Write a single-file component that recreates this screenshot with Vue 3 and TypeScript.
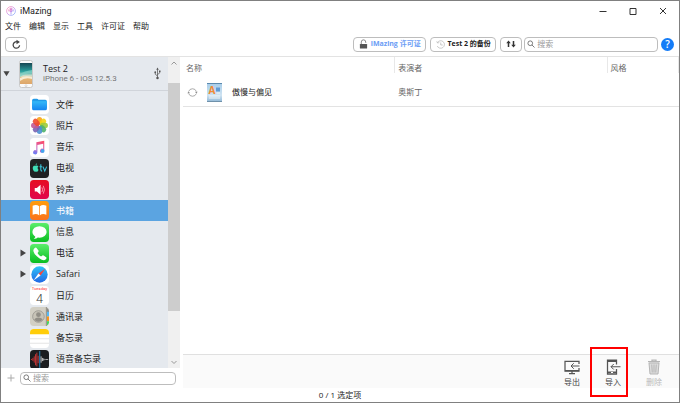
<script setup lang="ts">
import { ref } from 'vue'

interface Category {
  id: string
  label: string
  expandable?: boolean
}

interface Book {
  title: string
  artist: string
  genre: string
}

const menus: string[] = ['文件', '编辑', '显示', '工具', '许可证', '帮助']

const categories: Category[] = [
  { id: 'files', label: '文件' },
  { id: 'photos', label: '照片' },
  { id: 'music', label: '音乐' },
  { id: 'tv', label: '电视' },
  { id: 'ringtones', label: '铃声' },
  { id: 'books', label: '书籍' },
  { id: 'messages', label: '信息' },
  { id: 'phone', label: '电话', expandable: true },
  { id: 'safari', label: 'Safari', expandable: true },
  { id: 'calendar', label: '日历' },
  { id: 'contacts', label: '通讯录' },
  { id: 'notes', label: '备忘录' },
  { id: 'voice', label: '语音备忘录' },
]

const books: Book[] = [{ title: '傲慢与偏见', artist: '奥斯丁', genre: '' }]

const petals: string[] = ['#f9a11b', '#f4d313', '#9ccb3b', '#4fb36b', '#4b8fd0', '#7a64b4', '#c05a96', '#ee4b2f']

const selected = ref('books')
const query = ref('')
const sideQuery = ref('')
</script>

<template>
  <div class="window">
    <header class="titlebar">
      <svg class="logo" viewBox="0 0 20 20" aria-hidden="true">
        <defs>
          <linearGradient id="logo-ring" x1="0" y1="0" x2="1" y2="1">
            <stop offset="0" stop-color="#ff7d9c" />
            <stop offset="0.5" stop-color="#c27be8" />
            <stop offset="1" stop-color="#59a9ff" />
          </linearGradient>
        </defs>
        <circle cx="10" cy="10" r="8.8" fill="#fff" stroke="url(#logo-ring)" stroke-width="1.3" />
        <path d="M10 17V8M10 12L6.5 9M10 12L13.5 9M6 11a4.5 4.5 0 1 1 8 0" fill="none" stroke="url(#logo-ring)" stroke-width="1.5" />
        <circle cx="10" cy="7.5" r="1.8" fill="#d76fcb" />
      </svg>
      <h1 class="title">iMazing</h1>
      <div class="window-buttons">
        <button type="button" aria-label="最小化">
          <svg viewBox="0 0 8 8"><path d="M.5 4.5h7" /></svg>
        </button>
        <button type="button" aria-label="最大化">
          <svg viewBox="0 0 8 8"><path d="M1 1.5h6v6H1z" /></svg>
        </button>
        <button type="button" aria-label="关闭">
          <svg viewBox="0 0 8 8"><path d="M1 1l6 6M7 1L1 7" /></svg>
        </button>
      </div>
    </header>

    <nav class="menubar">
      <button v-for="menu in menus" :key="menu" type="button">{{ menu }}</button>
    </nav>

    <div class="toolbar">
      <button class="tool refresh" type="button" aria-label="刷新">
        <svg viewBox="0 0 16 16" fill="none" stroke="#444" stroke-width="1.8">
          <path d="M12.500 9A4.700 4.700 0 1 1 9.500 4.300" />
          <path d="M8 1l5 3.500-5 3z" fill="#444" stroke="none" />
        </svg>
      </button>
      <span class="spacer"></span>
      <button class="tool license" type="button">
        <svg viewBox="0 0 16 18">
          <path d="M4 9V5.500a4 4 0 0 1 8 0V7" fill="none" stroke="#777" stroke-width="1.500" />
          <rect x="1.500" y="9" width="13" height="8" rx="1" fill="#555" />
        </svg>
        <span>iMazing 许可证</span>
      </button>
      <button class="tool backup" type="button">
        <svg viewBox="0 0 18 18" fill="none" stroke="#aaa" stroke-width="1.200">
          <path d="M3 5a7.500 7.500 0 1 1-.5 7M1.500 2.500L3 6l3.500-.8M9.500 5v5h4" />
        </svg>
        <span>Test 2 的备份</span>
      </button>
      <button class="tool transfer" type="button" aria-label="传输">
        <svg viewBox="0 0 20 16" fill="#333">
          <path d="M5 1l4.500 5.500h-3V14h-3V6.500h-3zM15 15l-4.500-5.500h3V2h3v7.500h3z" />
        </svg>
      </button>
      <label class="search main-search">
        <svg viewBox="0 0 16 16" fill="none" stroke="#666" stroke-width="1.700">
          <circle cx="6.500" cy="6.500" r="4.700" /><path d="M10 10l5 5" />
        </svg>
        <input v-model="query" type="text" placeholder="搜索" aria-label="搜索" />
      </label>
      <button class="help" type="button" aria-label="帮助">?</button>
    </div>

    <div class="content">
      <aside class="sidebar">
        <div class="tree">
          <div class="tree-body">
            <div class="device">
              <svg class="disclosure" viewBox="0 0 8 8"><path d="M.5 1.500h7L4 7z" /></svg>
              <svg class="device-picture" viewBox="0 0 14 28" aria-hidden="true">
                <defs>
                  <linearGradient id="wallpaper" x1="0" y1="0" x2="0" y2="1">
                    <stop offset="0" stop-color="#174653" />
                    <stop offset="0.4" stop-color="#2ba19e" />
                    <stop offset="0.62" stop-color="#d7e5d2" />
                    <stop offset="0.7" stop-color="#e5b878" />
                    <stop offset="1" stop-color="#dda66a" />
                  </linearGradient>
                </defs>
                <rect x=".5" y=".5" width="13" height="27" rx="2" fill="#fafafa" stroke="#c9c9c9" />
                <rect x="1" y="3" width="12" height="21" fill="url(#wallpaper)" />
                <path d="M1 14q4-3 12-4v3q-7 0-12 4z" fill="#7fd0c4" opacity=".8" />
                <path d="M1 18q5-3 12-1v2q-7-2-12 2z" fill="#f7ead2" />
                <circle cx="7" cy="25.700" r="1" fill="none" stroke="#bbb" stroke-width=".5" />
              </svg>
              <div class="device-text">
                <strong>Test 2</strong>
                <span>iPhone 6 - iOS 12.5.3</span>
              </div>
              <svg class="usb" viewBox="0 0 14 24" fill="none" stroke="#555" stroke-width="1.500">
                <path d="M7 3v17M7 17l-4.500-3.500V10M7 14l4.500-3V8" />
                <path d="M7 0L4.500 4.500h5zM10 6h3v3h-3z" fill="#555" stroke="none" />
                <circle cx="2.500" cy="9.500" r="1.800" fill="#555" stroke="none" />
                <circle cx="7" cy="21" r="2.500" fill="#555" stroke="none" />
              </svg>
            </div>

            <ul class="categories">
              <li v-for="item in categories" :key="item.id">
                <button
                  type="button"
                  class="category"
                  :class="{ selected: selected === item.id }"
                  @click="selected = item.id"
                >
                  <span class="arrow">
                    <svg v-if="item.expandable" viewBox="0 0 6 8"><path d="M.5.500v7L6 4z" /></svg>
                  </span>
                  <svg class="app-icon" viewBox="0 0 36 36" aria-hidden="true">
                    <g v-if="item.id === 'files'">
                      <defs>
                        <linearGradient id="folder" x1="0" y1="0" x2="0" y2="1">
                          <stop offset="0" stop-color="#35b9f8" /><stop offset="1" stop-color="#1583f0" />
                        </linearGradient>
                      </defs>
                      <rect width="36" height="36" rx="7" fill="#fff" />
                      <path d="M4 10q0-3 3-3h6q2 0 3 2h13q3 0 3 3v13H4z" fill="#229be8" />
                      <path d="M4 12h28v14q0 3-3 3H7q-3 0-3-3z" fill="url(#folder)" />
                    </g>
                    <g v-else-if="item.id === 'photos'">
                      <rect width="36" height="36" rx="7" fill="#fff" />
                      <rect
                        v-for="(color, index) in petals"
                        :key="color"
                        x="13" y="2" width="10" height="15" rx="5"
                        :fill="color"
                        fill-opacity=".9"
                        :transform="`rotate(${index * 45} 18 18)`"
                      />
                    </g>
                    <g v-else-if="item.id === 'music'">
                      <defs>
                        <linearGradient id="note" x1=".6" y1="0" x2=".3" y2="1">
                          <stop offset="0" stop-color="#fb4b69" /><stop offset=".5" stop-color="#d465b7" /><stop offset="1" stop-color="#6a7cf5" />
                        </linearGradient>
                      </defs>
                      <rect width="36" height="36" rx="7" fill="#fff" />
                      <path d="M12 8l15-3v19a4 4 0 1 1-2-3.500V11l-11 2.300V27a4 4 0 1 1-2-3.500z" fill="url(#note)" />
                      <circle cx="24" cy="24.500" r="3.500" fill="#41a7ef" />
                    </g>
                    <g v-else-if="item.id === 'tv'">
                      <rect width="36" height="36" rx="7" fill="#202224" />
                      <path d="M10.500 13q2-1 4 0 1.500 1 1.500 1-2 1.500-1.500 3.500.3 2 1.800 3-1.500 3.500-3 3.500-1 0-2-.5-1 .5-2 .5C7 23.500 5 20 5.200 16.500 5.500 13 8 12 10.500 13zM10.500 12q0-3 3-4 0 3-3 4z" fill="#40ddb8" />
                      <path d="M20.500 10v10.500q0 2.500 2.500 2.500M18 14.500h5M24.500 14.500l3.500 8.500 3.500-8.500" fill="none" stroke="#3bc9df" stroke-width="2" />
                    </g>
                    <g v-else-if="item.id === 'ringtones'">
                      <defs>
                        <linearGradient id="tone" x1="0" y1="0" x2="0" y2="1">
                          <stop offset="0" stop-color="#e60d21" /><stop offset="1" stop-color="#e1074d" />
                        </linearGradient>
                      </defs>
                      <rect width="36" height="36" rx="7" fill="url(#tone)" />
                      <path d="M9 15h4l7-6v19l-7-6H9z" fill="#fff" />
                      <path d="M22.500 14q3 4.500 0 9M25 11q5 7.500 0 15" fill="none" stroke="#ffb4bf" stroke-width="1.500" />
                    </g>
                    <g v-else-if="item.id === 'books'">
                      <defs>
                        <linearGradient id="book" x1="0" y1="0" x2="0" y2="1">
                          <stop offset="0" stop-color="#ff9d0d" /><stop offset="1" stop-color="#fa721c" />
                        </linearGradient>
                      </defs>
                      <rect width="36" height="36" rx="7" fill="url(#book)" />
                      <path d="M5 9q7-3.500 12.300 1v17Q12 23 5 26zM31 9q-7-3.500-12.300 1v17Q24 23 31 26z" fill="#fff" />
                    </g>
                    <g v-else-if="item.id === 'messages'">
                      <defs>
                        <linearGradient id="green" x1="0" y1="0" x2="0" y2="1">
                          <stop offset="0" stop-color="#5cee6c" /><stop offset="1" stop-color="#08bd20" />
                        </linearGradient>
                      </defs>
                      <rect width="36" height="36" rx="7" fill="url(#green)" />
                      <ellipse cx="18" cy="17" rx="13.500" ry="11" fill="#fff" />
                      <path d="M10 24q1 4-3 6 5 .5 8-3z" fill="#fff" />
                    </g>
                    <g v-else-if="item.id === 'phone'">
                      <rect width="36" height="36" rx="7" fill="url(#green)" />
                      <path d="M8 8.500q3-3 4.500-1l3.500 5q1 2-1 3.500-1 1 0 2.500 2 3 5 4.500 1.500 1 2.500-.3 1.500-2 3.500-.7l4.500 3.200q2 1.500-1 4.300-4 3-12-2.500Q8 20 6.500 13.500 6 10.500 8 8.500z" fill="#fff" />
                    </g>
                    <g v-else-if="item.id === 'safari'">
                      <defs>
                        <linearGradient id="compass" x1="0" y1="0" x2="0" y2="1">
                          <stop offset="0" stop-color="#2fc3f8" /><stop offset="1" stop-color="#2168e5" />
                        </linearGradient>
                      </defs>
                      <rect width="36" height="36" rx="7" fill="#fff" />
                      <circle cx="18" cy="18" r="15.500" fill="url(#compass)" />
                      <path d="M29 7L16 16l4 4z" fill="#f4483f" />
                      <path d="M7 29l9-13 4 4z" fill="#fff" />
                    </g>
                    <g v-else-if="item.id === 'calendar'" class="calendar">
                      <rect width="36" height="36" rx="7" fill="#fff" />
                      <text x="18" y="8" text-anchor="middle" font-size="8" fill="#f33">Tuesday</text>
                      <text x="18" y="32" text-anchor="middle" font-size="24" font-weight="300" fill="#333">4</text>
                    </g>
                    <g v-else-if="item.id === 'contacts'">
                      <rect width="36" height="36" rx="7" fill="#d2cfc4" />
                      <path d="M31 1q5 2 5 7v2h-5z" fill="#8a8a88" />
                      <path d="M32 9h4v9h-4z" fill="#55b9f5" /><path d="M32 18h4v9h-4z" fill="#fb9418" />
                      <path d="M32 27h4v2q0 4-4 6z" fill="#45d95c" /><path d="M30 0h2v36h-2z" fill="#98958b" />
                      <circle cx="16" cy="18" r="11" fill="#c7c3b7" stroke="#96938b" stroke-width="1.500" />
                      <circle cx="16" cy="14.500" r="4.500" fill="#918e86" />
                      <path d="M8 24q2-4 8-4t8 4q-8 8-16 0z" fill="#918e86" />
                    </g>
                    <g v-else-if="item.id === 'notes'">
                      <rect width="36" height="36" rx="7" fill="#fff" />
                      <path d="M0 10V7q0-7 7-7h22q7 0 7 7v3z" fill="#ffcd09" />
                      <path d="M0 18.500h36M0 27h36" stroke="#d5d5d5" stroke-width="1.200" />
                    </g>
                    <g v-else>
                      <rect width="36" height="36" rx="7" fill="#1c1d1f" />
                      <path d="M3 17v2M5.500 15v6M8 12v12M10.500 8v21M13 5v26M15.500 11v14" stroke="#e83c3c" stroke-width="1.500" />
                      <path d="M18.500 2v32" stroke="#2aa8ed" stroke-width="1.500" />
                      <path d="M21 12v12M23.500 15v6M26 16v4M28.500 17v2M31 17v2M33.500 17v2" stroke="#eee" stroke-width="1.500" />
                    </g>
                  </svg>
                  <span>{{ item.label }}</span>
                </button>
              </li>
            </ul>
          </div>
          <div class="scrollbar" aria-hidden="true">
            <svg viewBox="0 0 12 12"><path d="M3.500 7.500L6 5l2.500 2.500" /></svg>
            <div class="track"><div class="thumb"></div><div class="rest"></div></div>
            <svg viewBox="0 0 12 12"><path d="M3.500 5L6 7.500 8.500 5" /></svg>
          </div>
        </div>
        <div class="side-footer">
          <button class="add" type="button" aria-label="添加">
            <svg viewBox="0 0 8 8"><path d="M4 .500v7M.500 4h7" fill="none" stroke="#aaa" /></svg>
          </button>
          <label class="search">
            <svg viewBox="0 0 16 16" fill="none" stroke="#666" stroke-width="1.700">
              <circle cx="6.500" cy="6.500" r="4.700" /><path d="M10 10l5 5" />
            </svg>
            <input v-model="sideQuery" type="text" placeholder="搜索" aria-label="搜索设备" />
          </label>
        </div>
      </aside>

      <main class="main">
        <table class="books">
          <colgroup><col class="col-wide" /><col class="col-wide" /><col /></colgroup>
          <thead>
            <tr><th>名称</th><th>表演者</th><th>风格</th></tr>
          </thead>
          <tbody>
            <tr v-for="book in books" :key="book.title">
              <td>
                <div class="book">
                  <svg class="sync" viewBox="0 0 20 20" fill="none" stroke="#8a8a8a" stroke-width="1.300">
                    <path d="M3 8a7.500 7.500 0 0 1 14 0M17 12a7.500 7.500 0 0 1-14 0" />
                    <path d="M14.500 8.500h5L17 12zM.500 11.500h5L3 8z" fill="#8a8a8a" stroke="none" />
                  </svg>
                  <svg class="cover" viewBox="0 0 30 38">
                    <defs>
                      <linearGradient id="cover-fill" x1="0" y1="0" x2="0" y2="1">
                        <stop offset="0" stop-color="#a6cce8" /><stop offset=".65" stop-color="#cfe3f2" /><stop offset="1" stop-color="#8eb6d5" />
                      </linearGradient>
                    </defs>
                    <rect width="30" height="38" rx="1" fill="url(#cover-fill)" />
                    <path d="M0 0h30v2H0z" fill="#5b89ae" />
                    <path d="M0 36h30v2H0z" fill="#6f91aa" />
                    <path d="M18 9h8v8h-8z" fill="#609bd5" />
                    <path d="M19 20h7M4 26h22M4 30h22" stroke="#fff" stroke-width="1.500" />
                    <text x="3" y="22" font-size="20" font-weight="bold" fill="#f18b35">A</text>
                  </svg>
                  <span>{{ book.title }}</span>
                </div>
              </td>
              <td>{{ book.artist }}</td>
              <td>{{ book.genre }}</td>
            </tr>
          </tbody>
        </table>

        <div class="actions">
          <button type="button">
            <svg viewBox="0 0 32 32" fill="none" stroke="#555" stroke-width="2.500">
              <path d="M30 10V4.500H2V24h28v-6" />
              <path d="M2 23h28M10 29h12M16 24v5" />
              <path d="M31 14H14M19.500 8.500L14 14l5.500 5.500" stroke-width="2" />
            </svg>
            <span>导出</span>
          </button>
          <button type="button" class="highlighted">
            <svg viewBox="0 0 32 32" fill="none" stroke="#555" stroke-width="2.500">
              <path d="M23 11V2H5v28h18V20" />
              <path d="M5 4h18M5 27h18" stroke-width="4" />
              <path d="M12 27h4" stroke="#fff" stroke-width="2" />
              <path d="M31 15.500H12M17.500 10L12 15.500l5.500 5.500" stroke-width="2" />
            </svg>
            <span>导入</span>
          </button>
          <button type="button" disabled>
            <svg viewBox="0 0 32 32" fill="none" stroke="#b5b5b5" stroke-width="2">
              <path d="M6 8h20l-2 22H8z" fill="#ddd" />
              <path d="M4 5h24M12 5V2h8v3" stroke-width="2.500" />
              <path d="M11.500 11l1 16M16 11v16M20.500 11l-1 16" />
            </svg>
            <span>删除</span>
          </button>
        </div>
      </main>
    </div>

    <footer class="status">0 / 1 选定项</footer>
  </div>
</template>

<style>
body {
  margin: 0;
  background: #fff;
}
</style>

<style scoped>
.window {
  box-sizing: border-box;
  display: flex;
  flex-direction: column;
  height: 100vh;
  border: 1px solid #808080;
  background: #fff;
  color: #222;
  font-family: "Open Sans", "Noto Sans CJK SC", sans-serif;
  font-size: 8px;
  line-height: 12px;
}

svg {
  display: block;
  flex: none;
}

button {
  margin: 0;
  padding: 0;
  border: 0;
  background: none;
  color: inherit;
  font: inherit;
}

.titlebar {
  display: flex;
  align-items: center;
  height: 19px;
  padding-left: 5px;
}

.logo {
  width: 10px;
  height: 10px;
}

.title {
  flex: 1;
  margin: 0 0 0 4px;
  font-family: Roboto, sans-serif;
  font-size: 9px;
  font-weight: 400;
}

.window-buttons {
  display: flex;
  padding-right: 1px;
}

.window-buttons button {
  display: grid;
  place-items: center;
  width: 30px;
  height: 18px;
}

.window-buttons svg {
  width: 8px;
  height: 8px;
  fill: none;
  stroke: #333;
}

.menubar {
  display: flex;
  gap: 8px;
  padding: 0 4px;
}

.toolbar {
  display: flex;
  align-items: center;
  gap: 2px;
  height: 24px;
  padding: 0 5px 0 4px;
  border-bottom: 1px solid #e3e3e3;
}

.spacer {
  flex: 1;
}

.tool,
.search {
  box-sizing: border-box;
  display: flex;
  align-items: center;
  height: 15px;
  border: 1px solid #bdbdbd;
  border-radius: 4px;
  background: #fff;
}

.tool {
  justify-content: center;
  gap: 3px;
  font-size: 7px;
  font-weight: 700;
}

.refresh,
.transfer {
  width: 22px;
}

.refresh svg {
  width: 11px;
  height: 11px;
}

.transfer svg {
  width: 10px;
  height: 8px;
}

.license {
  min-width: 73px;
  color: #6a9cf5;
}

.license svg {
  width: 9px;
  height: 10px;
}

.backup {
  min-width: 66px;
  margin: 0 2px;
}

.backup svg {
  width: 9px;
  height: 9px;
}

.search {
  gap: 2px;
  padding: 0 2px;
}

.search svg {
  width: 8px;
  height: 8px;
}

.search input {
  flex: 1;
  min-width: 0;
  padding: 0;
  border: 0;
  outline: 0;
  background: none;
  font: inherit;
}

.search input::placeholder {
  color: #999;
}

.main-search {
  width: 20%;
}

.help {
  width: 13px;
  height: 13px;
  margin-left: 1px;
  border-radius: 50%;
  background: #147cf7;
  color: #fff;
  font-size: 10px;
  font-weight: 600;
}

.content {
  display: flex;
  flex: 1;
  min-height: 0;
}

.sidebar {
  display: flex;
  flex: none;
  flex-direction: column;
  width: 179px;
  margin-right: 3px;
}

.tree {
  display: flex;
  flex: 1;
  min-height: 0;
  background: #e5e9ee;
}

.tree-body {
  display: flex;
  flex: 1;
  flex-direction: column;
  min-width: 0;
  overflow: hidden;
}

.device {
  display: flex;
  align-items: center;
  height: 33px;
  padding: 0 7px 0 2px;
  border-bottom: 1px solid #d0d4da;
}

.disclosure {
  width: 7px;
  height: 7px;
  fill: #444;
}

.device-picture {
  width: 14px;
  height: 28px;
  margin: 0 10px 0 9px;
}

.device-text {
  display: flex;
  flex: 1;
  flex-direction: column;
  line-height: 10px;
}

.device-text strong {
  font-size: 9px;
  font-weight: 400;
}

.device-text span {
  color: #777;
  font-family: Roboto, sans-serif;
}

.usb {
  width: 7px;
  height: 13px;
}

.categories {
  display: flex;
  flex: 1;
  flex-direction: column;
  margin: 3px 0 -2px;
  padding: 0;
  list-style: none;
}

.categories li {
  display: flex;
  flex: 1;
}

.category {
  display: flex;
  flex: 1;
  align-items: center;
  padding-left: 19px;
  font-size: 9px;
  text-align: left;
}

.category.selected {
  background: #5ba4e1;
  color: #fff;
}

.arrow {
  width: 10px;
}

.arrow svg {
  width: 6px;
  height: 8px;
  fill: #444;
}

.app-icon {
  width: 19px;
  height: 19px;
  margin-right: 7px;
}

.calendar {
  font-family: Roboto, sans-serif;
}

.scrollbar {
  display: flex;
  flex-direction: column;
  width: 12px;
  background: #f0f0f0;
}

.scrollbar svg {
  width: 12px;
  height: 12px;
  fill: none;
  stroke: #999;
}

.track {
  display: flex;
  flex: 1;
  flex-direction: column;
  padding-top: 14px;
}

.thumb {
  flex: 5;
  background: #cdcdcd;
}

.rest {
  flex: 1;
}

.side-footer {
  display: flex;
  align-items: center;
  height: 20px;
  padding: 0 4px 0 6px;
}

.add {
  margin-right: 5px;
}

.add svg {
  width: 8px;
  height: 8px;
}

.side-footer .search {
  flex: 1;
  height: 13px;
}

.main {
  display: flex;
  flex: 1;
  flex-direction: column;
  justify-content: space-between;
  min-width: 0;
}

.books {
  width: 100%;
  border-spacing: 0;
  table-layout: fixed;
  color: #666;
}

.col-wide {
  width: 42.8%;
}

.books th {
  height: 21px;
  padding: 0 0 0 3px;
  background: linear-gradient(#e8e8e8, #e8e8e8) right top / 1px 16px no-repeat;
  font-weight: 400;
  text-align: left;
}

.books td {
  height: 28px;
  padding: 0 0 0 3px;
  border-bottom: 1px solid #e3e3e3;
}

.book {
  display: flex;
  align-items: center;
  padding-left: 1px;
  color: #222;
}

.sync {
  width: 11px;
  height: 11px;
}

.cover {
  width: 15px;
  height: 19px;
  margin: 0 10px 0 9px;
}

.actions {
  display: flex;
  justify-content: flex-end;
  gap: 11px;
  padding: 4px 10px 0 0;
  border-top: 1px solid #e0e0e0;
  background: #fafafa;
}

.actions button {
  position: relative;
  display: flex;
  flex-direction: column;
  align-items: center;
  gap: 1px;
  width: 30px;
  color: #444;
}

.actions svg {
  width: 16px;
  height: 16px;
}

.actions button:disabled {
  color: #bbb;
}

.highlighted::after {
  content: "";
  position: absolute;
  inset: -12px 0 -9px -8px;
  border: 2px solid #f00;
  pointer-events: none;
}

.status {
  height: 14px;
  line-height: 14px;
  text-align: center;
}
</style>
